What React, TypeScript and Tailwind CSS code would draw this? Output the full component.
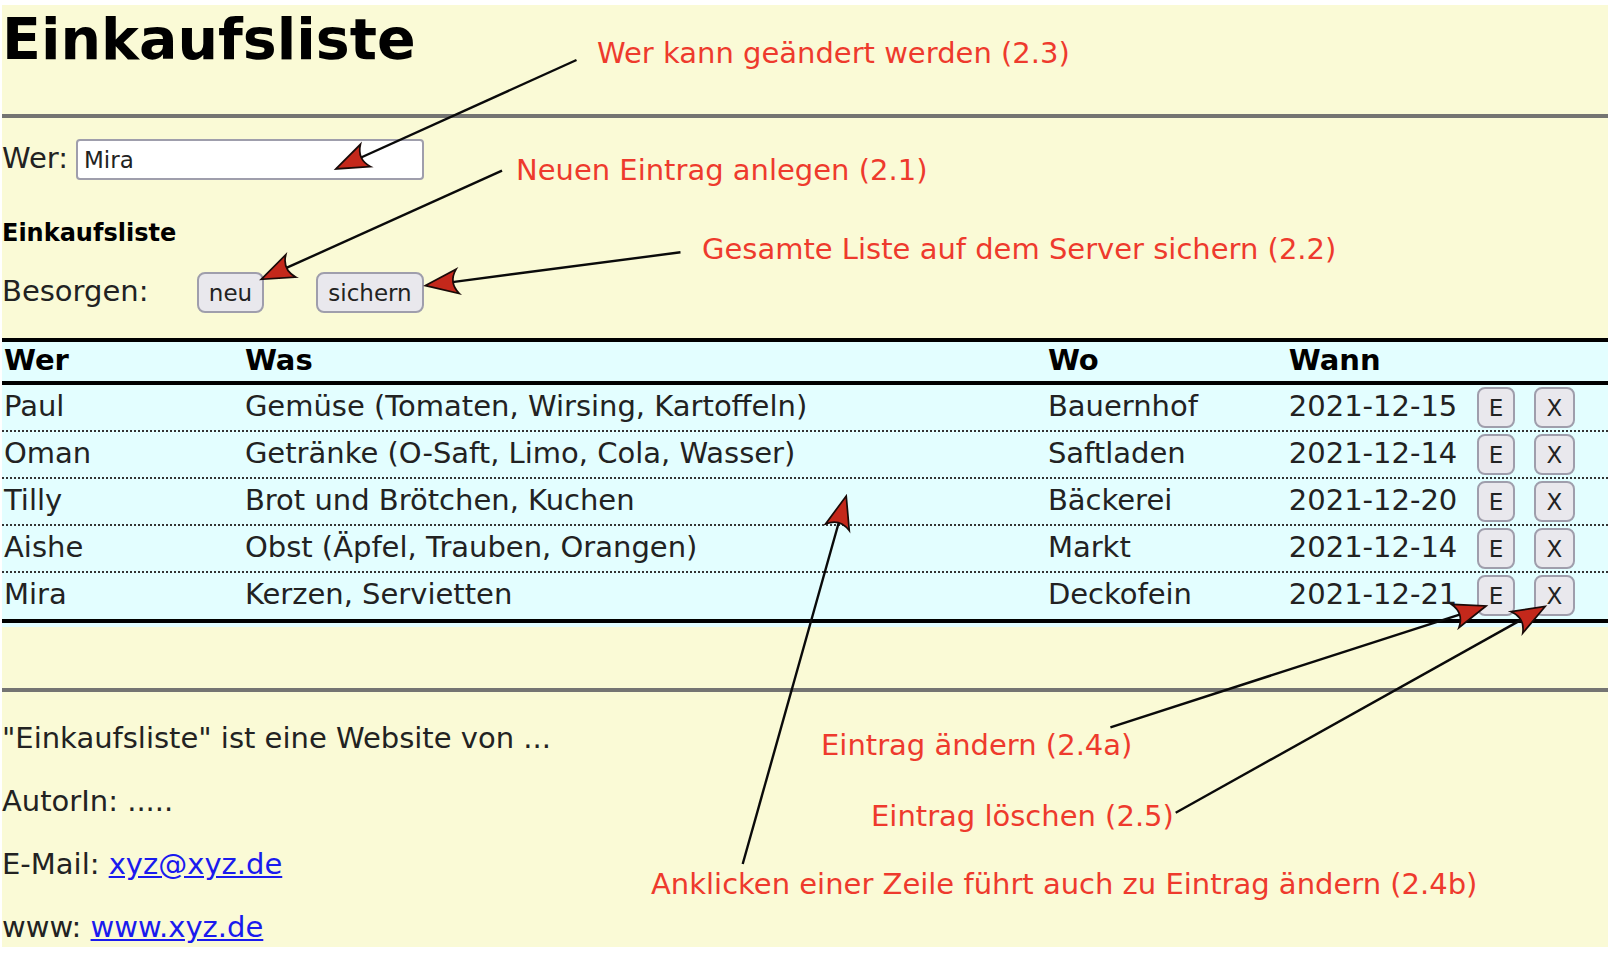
import { useState } from 'react';

type Entry = { wer: string; was: string; wo: string; wann: string };

const entries: Entry[] = [
  { wer: 'Paul', was: 'Gemüse (Tomaten, Wirsing, Kartoffeln)', wo: 'Bauernhof', wann: '2021-12-15' },
  { wer: 'Oman', was: 'Getränke (O-Saft, Limo, Cola, Wasser)', wo: 'Saftladen', wann: '2021-12-14' },
  { wer: 'Tilly', was: 'Brot und Brötchen, Kuchen', wo: 'Bäckerei', wann: '2021-12-20' },
  { wer: 'Aishe', was: 'Obst (Äpfel, Trauben, Orangen)', wo: 'Markt', wann: '2021-12-14' },
  { wer: 'Mira', was: 'Kerzen, Servietten', wo: 'Deckofein', wann: '2021-12-21' },
];

const buttonStyle =
  'h-[41px] rounded-lg border-2 border-[#9f9eac] bg-[#e9e8ed] text-[23px] leading-7 text-[#222]';

/** Straight arrow from a note to the spot it explains. */
function Arrow({ from, to }: { from: [number, number]; to: [number, number] }) {
  const dx = from[0] - to[0];
  const dy = from[1] - to[1];
  const length = Math.hypot(dx, dy);
  const angle = (Math.atan2(dy, dx) * 180) / Math.PI;
  return (
    <g transform={`translate(${to[0]} ${to[1]}) rotate(${angle})`}>
      <line x1={28} y1={0} x2={length} y2={0} stroke="#0a0a0a" strokeWidth={2.4} />
      <path
        d="M1 0 L33.5 -12.3 Q24 0 33.5 12.3 Z"
        fill="#c4281b"
        stroke="#1a0a08"
        strokeWidth={1.7}
      />
    </g>
  );
}

function Notes() {
  return (
    <div className="pointer-events-none absolute inset-0 overflow-hidden text-[29px] leading-[34px] whitespace-nowrap text-[#ee3a2d]">
      <svg className="absolute inset-0 h-full w-full" aria-hidden="true">
        <Arrow from={[576.5, 60]} to={[335, 169.3]} />
        <Arrow from={[502, 170.7]} to={[260.3, 279.7]} />
        <Arrow from={[680.5, 252.3]} to={[424.5, 285.7]} />
        <Arrow from={[742.7, 864]} to={[846.5, 495]} />
        <Arrow from={[1110.4, 727.3]} to={[1487, 605.7]} />
        <Arrow from={[1175.7, 812.7]} to={[1546, 606]} />
      </svg>
      <p className="absolute top-[36px] left-[597px]">Wer kann geändert werden (2.3)</p>
      <p className="absolute top-[153px] left-[516px]">Neuen Eintrag anlegen (2.1)</p>
      <p className="absolute top-[232px] left-[702px]">Gesamte Liste auf dem Server sichern (2.2)</p>
      <p className="absolute top-[728px] left-[821px]">Eintrag ändern (2.4a)</p>
      <p className="absolute top-[799px] left-[871px]">Eintrag löschen (2.5)</p>
      <p className="absolute top-[867px] left-[651px]">Anklicken einer Zeile führt auch zu Eintrag ändern (2.4b)</p>
    </div>
  );
}

export default function App() {
  const [name, setName] = useState('Mira');

  return (
    <div className="relative bg-white px-[2px] pt-[5px] font-['DejaVu_Sans',sans-serif] text-[29px] leading-[34px] text-[#222]">
      <div className="bg-[#fafad6] pb-[3px]">
        <header>
          <h1 className="text-[57px] leading-[68px] font-bold text-black">Einkaufsliste</h1>
        </header>
        <hr className="mt-[41px] border-t-4 border-[#747472]" />

        <main>
          <div className="mt-[21px] flex items-baseline gap-2">
            <label htmlFor="wer">Wer:</label>
            <input
              id="wer"
              value={name}
              onChange={(e) => setName(e.target.value)}
              className="h-[41px] w-[348px] rounded-sm border-2 border-[#9f9eac] bg-white px-[6px] text-[23px] leading-7"
            />
          </div>

          <h2 className="mt-[39px] text-2xl leading-7 font-bold text-black">Einkaufsliste</h2>

          <div className="mt-[25px] flex items-baseline">
            <span className="w-[195px]">Besorgen:</span>
            <button type="button" className={`${buttonStyle} w-[67px]`}>neu</button>
            <button type="button" className={`${buttonStyle} ml-[52px] w-[108px]`}>sichern</button>
          </div>

          <div className="mt-[25px] bg-[#e3feff] pb-1">
            <table className="w-full table-fixed border-separate border-spacing-0 text-left">
              <colgroup>
                <col className="w-[15%]" />
                <col className="w-[50%]" />
                <col className="w-[15%]" />
                <col />
                <col className="w-[57px]" />
                <col className="w-[75px]" />
              </colgroup>
              <thead className="text-black">
                <tr className="*:border-y-4 *:border-black *:px-[2px] *:pt-px *:pb-1">
                  <th>Wer</th>
                  <th>Was</th>
                  <th>Wo</th>
                  <th>Wann</th>
                  <td colSpan={2} />
                </tr>
              </thead>
              <tbody>
                {entries.map((entry, i) => (
                  <tr
                    key={entry.wer}
                    className={
                      i === entries.length - 1
                        ? 'h-[50px] cursor-pointer align-top *:border-b-4 *:border-black'
                        : 'h-[47px] cursor-pointer bg-[repeating-linear-gradient(90deg,#333_0_2px,transparent_2px_4px)] bg-[length:100%_2px] bg-bottom bg-no-repeat align-top'
                    }
                  >
                    <td className="px-[2px] pt-1">{entry.wer}</td>
                    <td className="px-[2px] pt-1">{entry.was}</td>
                    <td className="px-[2px] pt-1">{entry.wo}</td>
                    <td className="px-[2px] pt-1">{entry.wann}</td>
                    <td className="pt-[2px] pl-px">
                      <button type="button" aria-label={`${entry.wer} ändern`} className={`${buttonStyle} block w-[38px]`}>
                        E
                      </button>
                    </td>
                    <td className="pt-[2px] pl-px">
                      <button type="button" aria-label={`${entry.wer} löschen`} className={`${buttonStyle} block w-[41px]`}>
                        X
                      </button>
                    </td>
                  </tr>
                ))}
              </tbody>
            </table>
          </div>
        </main>

        <hr className="mt-[61px] border-t-4 border-[#747472]" />
        <footer className="mt-[29px] flex flex-col gap-[29px]">
          <p>&quot;Einkaufsliste&quot; ist eine Website von ...</p>
          <p>AutorIn: .....</p>
          <p>
            E-Mail:{' '}
            <a href="mailto:xyz@xyz.de" className="text-[#1a1aee] underline">xyz@xyz.de</a>
          </p>
          <p>
            www:{' '}
            <a href="#www" className="text-[#1a1aee] underline">www.xyz.de</a>
          </p>
        </footer>
      </div>
      <Notes />
    </div>
  );
}
